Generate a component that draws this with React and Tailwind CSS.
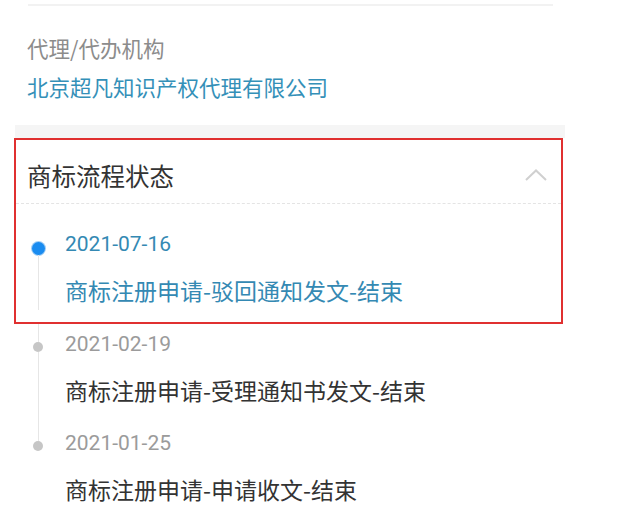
import React from "react";

const CJK = { fontFamily: '"Noto Sans CJK SC", "Noto Sans", sans-serif' };
const NUM = { fontFamily: 'Roboto, "Noto Sans CJK SC", sans-serif' };

function Item({ date, text, active, first, last }) {
  return (
    <div className={`flex items-stretch ${active ? "pt-[20px] pb-[12px]" : ""}`}>
      <div className="flex w-[44px] shrink-0 flex-col items-center">
        <div
          className={`w-px ${active ? "h-[18px]" : "h-[18px]"} ${first ? "bg-transparent" : "bg-[#e6e6e6]"}`}
        />
        {active ? (
          <div className="h-[13px] w-[13px] rounded-full bg-[#1a8cf0] shadow-[0_0_0_1px_#9fcdf5]" />
        ) : (
          <div className="h-[10px] w-[10px] rounded-full bg-[#c6c6c6]" />
        )}
        <div className={`w-px flex-1 ${last ? "bg-transparent" : "bg-[#e6e6e6]"}`} />
      </div>
      <div className="pl-[5px]">
        <div
          style={NUM}
          className={`h-[40px] leading-[40px] text-[21px] ${active ? "text-[#3489b3]" : "text-[#9b9b9b]"}`}
        >
          {date}
        </div>
        <div
          style={CJK}
          className={`mt-[6px] h-[40px] leading-[40px] text-[23px] ${active ? "text-[#3489b3]" : "text-[#333333]"} ${active ? "" : "mb-[13px]"}`}
        >
          {text}
        </div>
      </div>
    </div>
  );
}

export default function App() {
  return (
    <div className="relative h-[528px] w-[623px] overflow-hidden bg-white">
      <div className="pt-[4px]">
        <div className="ml-[28px] h-[2px] w-[525px] bg-[#f2f2f2]" />
      </div>
      <div className="pl-[27px] pt-[27px]">
        <div style={CJK} className="h-[30px] leading-[30px] text-[21.5px] text-[#8c8c8c]">
          代理/代办机构
        </div>
        <div style={CJK} className="mt-[9px] h-[30px] leading-[30px] text-[21.5px] text-[#3490b8]">
          北京超凡知识产权代理有限公司
        </div>
      </div>
      <div className="ml-[15px] mt-[23px] h-[13px] w-[550px] bg-[#f5f5f5]" />
      <div className="ml-[14px] w-[549px] border-2 border-[#e03030] bg-white">
        <div className="flex h-[64px] items-center justify-between border-b border-dashed border-[#e4e4e4] pl-[11px] pr-[14px] pt-[9px]">
          <div style={CJK} className="text-[24.5px] leading-[30px] text-[#333333]">
            商标流程状态
          </div>
          <svg width="22" height="12" viewBox="0 0 22 12" className="mt-[-3px]">
            <path d="M1 11 L11 1.5 L21 11" fill="none" stroke="#d0d0d0" strokeWidth="2" />
          </svg>
        </div>
        <Item date="2021-07-16" text="商标注册申请-驳回通知发文-结束" active first />
      </div>
      <div className="ml-[16px]">
        <Item date="2021-02-19" text="商标注册申请-受理通知书发文-结束" />
        <Item date="2021-01-25" text="商标注册申请-申请收文-结束" last />
      </div>
    </div>
  );
}
